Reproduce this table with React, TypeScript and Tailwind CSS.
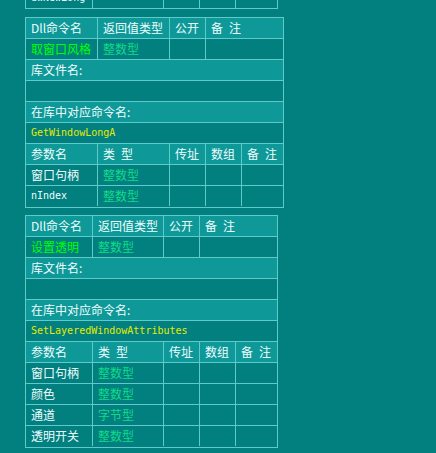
import React from "react";

type Cell = { t?: string; w: number; c?: string; mono?: boolean };

const WHITE = "text-[#eefefe]";
const GREEN = "text-[#00ff00]";
const TYPE = "text-[#10dc88]";
const YELLOW = "text-[#e4ec00]";

function Row({ cells, light, last }: { cells: Cell[]; light?: boolean; last?: boolean }) {
  return (
    <div
      className={`flex h-[21px] ${last ? "" : "border-b border-[#5ecaca]"} ${
        light ? "bg-[#0f9898]" : "bg-[#027f7f]"
      }`}
    >
      {cells.map((c, i) => (
        <div
          key={i}
          style={{ width: c.w }}
          className={`shrink-0 h-[20px] ${i > 0 ? "border-l border-[#5ecaca]" : ""} px-[5px] overflow-hidden whitespace-nowrap ${
            c.mono
              ? "font-['DejaVu_Sans_Mono',monospace] text-[10px] leading-[20px]"
              : "font-['Noto_Sans_CJK_SC',sans-serif] text-[12px] leading-[20px]"
          } ${c.c ?? WHITE}`}
        >
          {c.t ?? ""}
        </div>
      ))}
    </div>
  );
}

function DllTable({
  widths,
  name,
  code,
  params,
  className,
}: {
  widths: number[];
  name: string;
  code: string;
  params: [string, string, boolean?][];
  className?: string;
}) {
  const [a, b, c, d, e] = widths;
  const full = a + b + c + d + e;
  const rows: { cells: Cell[]; light?: boolean }[] = [
    {
      light: true,
      cells: [
        { t: "Dll命令名", w: a },
        { t: "返回值类型", w: b },
        { t: "公开", w: c },
        { t: "备\u2002注", w: d + e },
      ],
    },
    {
      cells: [
        { t: name, w: a, c: GREEN },
        { t: "整数型", w: b, c: TYPE },
        { w: c },
        { w: d + e },
      ],
    },
    { light: true, cells: [{ t: "库文件名:", w: full }] },
    { cells: [{ w: full }] },
    { light: true, cells: [{ t: "在库中对应命令名:", w: full }] },
    { cells: [{ t: code, w: full, c: YELLOW, mono: true }] },
    {
      light: true,
      cells: [
        { t: "参数名", w: a },
        { t: "类\u2002型", w: b },
        { t: "传址", w: c },
        { t: "数组", w: d },
        { t: "备\u2002注", w: e },
      ],
    },
    ...params.map(([n, t, m]) => ({
      cells: [
        { t: n, w: a, mono: m },
        { t, w: b, c: TYPE },
        { w: c },
        { w: d },
        { w: e },
      ] as Cell[],
    })),
  ];
  return (
    <div className={`border border-[#5ecaca] self-start ${className ?? ""}`}>
      {rows.map((r, i) => (
        <Row key={i} cells={r.cells} light={r.light} last={i === rows.length - 1} />
      ))}
    </div>
  );
}

export default function App() {
  const w3 = [66, 71, 36, 36, 42];
  return (
    <div className="w-[436px] h-[453px] bg-[#027f7f] overflow-hidden flex flex-col pl-[25px]">
      <div className="h-[9px] overflow-hidden flex flex-col justify-end self-start border-x border-b border-[#5ecaca]">
        <div className="flex h-[20px] shrink-0 bg-[#027f7f]">
          {[
            { t: "dwNewLong", w: w3[0] },
            { w: w3[1] },
            { w: w3[2] },
            { w: w3[3] },
            { w: w3[4] },
          ].map((c, i) => (
            <div
              key={i}
              style={{ width: c.w }}
              className={`shrink-0 h-[20px] ${i > 0 ? "border-l border-[#5ecaca]" : ""} px-[5px] overflow-hidden whitespace-nowrap font-['DejaVu_Sans_Mono',monospace] text-[10px] leading-[20px] ${WHITE}`}
            >
              {c.t ?? ""}
            </div>
          ))}
        </div>
      </div>
      <DllTable
        className="mt-[8px]"
        widths={[71, 72, 36, 36, 42]}
        name="取窗口风格"
        code="GetWindowLongA"
        params={[
          ["窗口句柄", "整数型"],
          ["nIndex", "整数型", true],
        ]}
      />
      <DllTable
        className="mt-[7px]"
        widths={w3}
        name="设置透明"
        code="SetLayeredWindowAttributes"
        params={[
          ["窗口句柄", "整数型"],
          ["颜色", "整数型"],
          ["通道", "字节型"],
          ["透明开关", "整数型"],
        ]}
      />
    </div>
  );
}
